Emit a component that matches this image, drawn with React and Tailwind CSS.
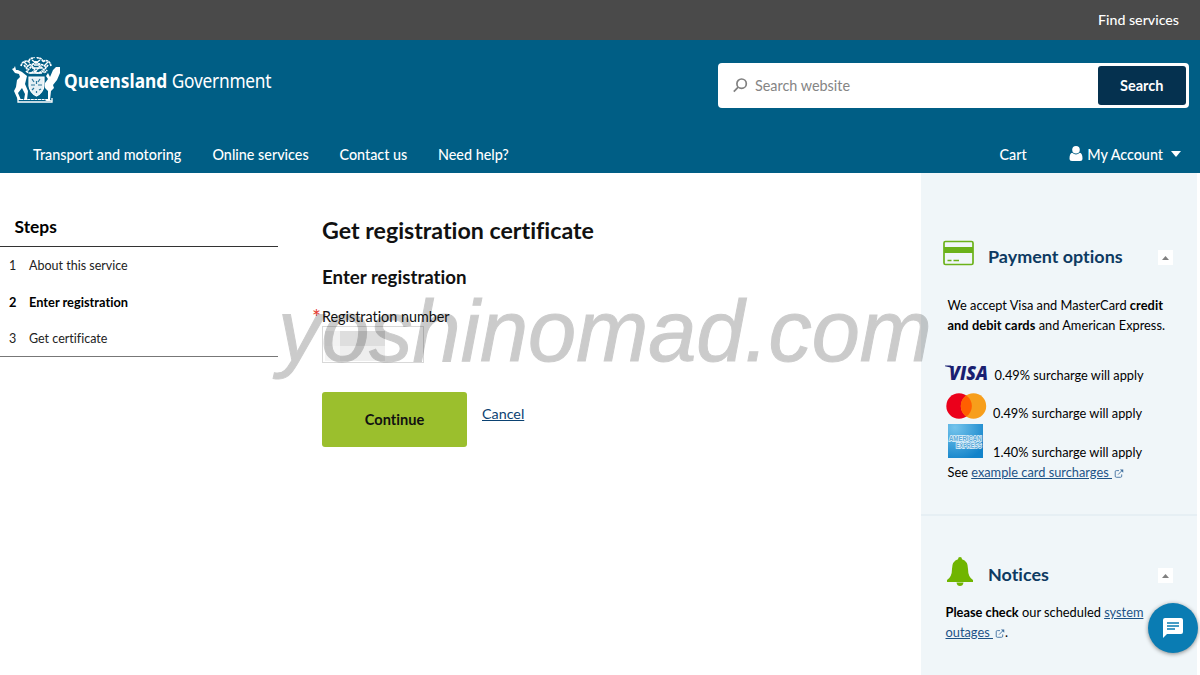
import React from "react";

function Crest() {
  return (
    <svg className="block h-[46px] w-[50px] shrink-0" viewBox="0 0 50 46" fill="none" stroke="#fff">
      <path d="M9 9 C10 4 15 3 17 5 C17 0 22 2 22 0 M39 9 C38 4 34 2 31 5 C30 0 26 2 25 0 M15 10 C18 6 22 9 24 4 C26 9 30 6 34 10 M12 8 L16 13 L20 9 L24 14 L28 9 L32 13 L36 8 M14 14 Q18 18 22 14 Q26 18 30 14 Q33 17 35 13" strokeWidth="1.7" strokeDasharray="2.4 .5" />
      <path d="M20 3 L24 6 L28 3 M20 11 H29 M22 8 H27 M18 16 H30 M12 5 L15 8 M36 5 L33 8" strokeWidth="1.4" />
      <path d="M2 11 L0 12 L3 16 L7 17 L8 20 L5 23 L4 30 L2 34 L6 43 L9 43 L6 36 L10 31 L13 37 L12 43 L15 43 L16 34 L13 27 L15 19 L10 15 L6 13 L4 13 L3 9 Z" fill="#fff" stroke="none" />
      <path d="M34 19 L36 16 L38 20 L41 13 L44 10 L48 10 L48 16 L45 23 L41 28 L42 31 L39 34 L38 43 L41 44 L33 44 L36 42 L36 34 L33 31 L33 26 L36 22 Z" fill="#fff" stroke="none" />
      <path d="M17 20 H32 V29 Q31 36 24.500 39 Q18 36 17 29 Z" fill="#e6f0f5" strokeWidth="1.2" />
      <path d="M20 22 L22 25 M28 22 L26 25 M19 28 H23 M26 28 H30 M20 33 L22 31 M27 33 L29 32 M24.500 34 V36 M24.500 24 V27" stroke="#2a769a" strokeWidth="1.2" />
      <path d="M6 41 V45 H40 V41" strokeWidth="1.300" />
      <path d="M8 42.500 H38" strokeWidth="1.2" strokeDasharray="3 .6" />
    </svg>
  );
}

function ExternalIcon({ className = "" }) {
  return (
    <svg className={"inline-block h-[9px] w-[10px] " + className} viewBox="0 0 10 10" fill="none" stroke="#3f6f9f" strokeWidth="1">
      <path d="M5 1.800 H2 Q.8 1.800 .8 3 V8 Q.8 9.200 2 9.200 H6.800 Q8 9.200 8 8 V6 M4 6.200 L8.300 1.800" />
      <path d="M6 .5 H9.700 V4.200 Z" fill="#3f6f9f" stroke="none" />
    </svg>
  );
}

function Collapse() {
  return (
    <button className="flex h-[15px] w-[15px] shrink-0 items-center justify-center bg-white">
      <svg className="h-1 w-[7px]" viewBox="0 0 7 4" fill="#808080"><path d="M3.500 0 L7 4 H0 Z" /></svg>
    </button>
  );
}

function TopBar() {
  return (
    <div className="flex h-10 items-center justify-end bg-[#4a4a4a] pr-[21px] text-[14.200px] font-medium text-white">
      Find services
    </div>
  );
}

function Header() {
  return (
    <header className="h-[133px] bg-[#005e85] text-white">
      <div className="flex h-[94px] items-start justify-between pr-[11px] pl-3">
        <div className="flex pt-[17px]">
          <Crest />
          <div className="ml-[2px] flex w-[210px] origin-left scale-x-[0.91] gap-[5px] pt-[11px] font-['Noto_Sans'] text-[19px] leading-[26px] whitespace-nowrap">
            <span className="font-bold">Queensland</span>
            <span className="tracking-[-0.25px]">Government</span>
          </div>
        </div>
        <div className="mt-[23px] flex h-[45px] w-[471px] items-center rounded bg-white pr-[3px] pl-[15px]">
          <svg className="h-[15px] w-[15px]" viewBox="0 0 15 15" fill="none" stroke="#808080" strokeWidth="1.700">
            <circle cx="8.600" cy="5.700" r="4.700" />
            <path d="M5.200 9.200 L.8 13.700" />
          </svg>
          <span className="ml-[7px] flex-1 text-[14.400px] text-[#858585]">Search website</span>
          <button className="h-[39px] w-[88.500px] rounded-[3px] bg-[#05314f] text-[14.500px] font-bold">Search</button>
        </div>
      </div>
      <nav className="flex h-[39px] items-center pt-[2px] pr-[19px] pl-[33px] text-[14.350px] leading-[37px] font-medium whitespace-nowrap">
        <a className="w-[179.500px]">Transport and motoring</a>
        <a className="w-[127px]">Online services</a>
        <a className="w-[98.500px]">Contact us</a>
        <a>Need help?</a>
        <a className="ml-auto">Cart</a>
        <a className="ml-[42.500px] flex items-center">
          <svg className="mr-1 mb-[2px] h-[15px] w-[14px]" viewBox="0 0 14 15" fill="#fff">
            <circle cx="7" cy="3.800" r="3.800" />
            <path d="M3.200 6.800 Q7 10 10.800 6.800 Q13.500 7.500 13.500 12.500 Q13.500 15 11 15 H3 Q.5 15 .5 12.500 Q.5 7.500 3.200 6.800 Z" />
          </svg>
          My Account
          <svg className="mb-[2px] ml-2 h-[6px] w-[10px]" viewBox="0 0 10 6" fill="#fff"><path d="M0 0 H10 L5 6 Z" /></svg>
        </a>
      </nav>
    </header>
  );
}

const steps = ["About this service", "Enter registration", "Get certificate"];

function Steps() {
  return (
    <aside className="w-[278px] pt-[36px]">
      <div className="h-[38px] border-b border-[#333] pl-[14.500px] text-[17.400px] leading-[36px] font-bold text-black">Steps</div>
      <ol className="h-[110px] border-b border-[#777] pt-[1px] text-[12.500px] text-[#222]">
        {steps.map((s, i) => (
          <li key={s} className={"flex h-[36.500px] items-center " + (i === 1 ? "text-[12.800px] font-bold text-black" : "")}>
            <span className="ml-[9px] w-[20px] shrink-0">{i + 1}</span>
            <span>{s}</span>
          </li>
        ))}
      </ol>
    </aside>
  );
}

function Content() {
  return (
    <main className="ml-[44px] flex-1 pt-[40px] text-[#111]">
      <h1 className="text-[23.200px] leading-[35px] font-bold">Get registration certificate</h1>
      <h2 className="mt-[15px] text-[18.700px] leading-[28px] font-bold">Enter registration</h2>
      <label className="mt-[17px] -ml-[10px] flex h-[18px] items-center text-[14.350px] leading-[18px]">
        <span className="w-[10px] text-[21px] leading-[18px] text-[#e53c32]">*</span>
        Registration number
      </label>
      <div className="h-[37px] w-[102px] border border-[#d8d8d8] bg-white pt-[4px] pl-[2px]">
        <div className="grid h-[30px] w-[60px] grid-cols-4 grid-rows-2">
          <i className="bg-[#f2f2f2]" /><i className="bg-[#dedede]" /><i className="bg-[#dddddd]" /><i className="bg-[#dedede]" />
          <i className="bg-[#f5f5f5]" /><i className="bg-[#eeeeee]" /><i className="bg-[#eeeeee]" /><i className="bg-[#eeeeee]" />
        </div>
      </div>
      <div className="mt-[29px] flex">
        <button className="h-[55px] w-[145px] rounded-[3px] bg-[#9bbf2d] text-[14.600px] font-bold">Continue</button>
        <a className="mt-[11px] ml-[15px] text-[14.300px] leading-[22px] text-[#0b4272] underline underline-offset-1">Cancel</a>
      </div>
    </main>
  );
}

function Sidebar() {
  return (
    <aside className="mr-[3px] w-[276px] shrink-0 bg-[#f0f6f9] text-[12.800px] leading-[19.500px] whitespace-nowrap text-black">
      <section className="h-[343px] border-b-2 border-[#e6eff4] pt-[67px]">
        <div className="flex h-[34px] items-start pl-[22px]">
          <svg className="h-[26px] w-[31px]" viewBox="0 0 31 26" fill="none">
            <rect x="1" y="1.500" width="29" height="23" rx="1.500" stroke="#6bb21a" strokeWidth="1.700" />
            <path d="M1 7 H30 V13 H1 Z" fill="#6bb21a" />
            <path d="M4.500 20.500 H8.500 M10.500 20.500 H16" stroke="#6bb21a" strokeWidth="1.300" />
          </svg>
          <h3 className="mt-[2px] ml-[14px] text-[17.950px] leading-[28px] font-bold text-[#0d3a62]">Payment options</h3>
          <div className="mt-[10px] mr-[24px] ml-auto"><Collapse /></div>
        </div>
        <p className="mt-[22px] pl-[26.500px]">
          We accept Visa and MasterCard <b className="tracking-[0.05px]">credit</b><br /><b className="tracking-[0.08px]">and debit cards</b> and American Express.
        </p>
        <div className="mt-[28px] flex h-[30px] items-start pl-[24px]">
          <svg className="mt-[2px] h-[15px] w-[44px] overflow-visible" viewBox="0 0 44 15">
            <text x="4" y="14.500" fontFamily="Open Sans" fontSize="19" fontWeight="800" fontStyle="italic" fill="#1a1f71" textLength="39" lengthAdjust="spacingAndGlyphs">VISA</text>
            <path d="M0 .5 H6 L8 4 Q5 2 0 1.300 Z" fill="#1a1f71" />
          </svg>
          <span className="mt-[3px] ml-[5.500px]">0.49% surcharge will apply</span>
        </div>
        <div className="flex h-[30px] items-start pl-[25px]">
          <svg className="h-[26px] w-[41px]" viewBox="0 0 41 26">
            <circle cx="13" cy="13" r="12.700" fill="#eb001b" />
            <circle cx="27.500" cy="13" r="12.700" fill="#f79e1b" />
            <path d="M20.300 2.500 A12.700 12.700 0 0 1 20.300 23.500 A12.700 12.700 0 0 1 20.300 2.500" fill="#ff5f00" />
          </svg>
          <span className="mt-[11px] ml-[6px]">0.49% surcharge will apply</span>
        </div>
        <div className="flex h-[39.500px] items-start pl-[27px]">
          <svg className="mt-[0.500px] h-[34px] w-[35px]" viewBox="0 0 35 34">
            <defs><radialGradient id="amex" cx=".2" cy=".1" r="1"><stop offset="0" stopColor="#74c4ec" /><stop offset="1" stopColor="#1283ca" /></radialGradient></defs>
            <rect width="35" height="34" fill="url(#amex)" />
            <g fontFamily="Liberation Sans" fontWeight="700" fontSize="6.500" fill="#5aa9d8" stroke="#e4f3fb" strokeWidth="1.500" paintOrder="stroke">
              <text x="1" y="17" textLength="32.500" lengthAdjust="spacingAndGlyphs">AMERICAN</text>
              <text x="8" y="24" textLength="25.500" lengthAdjust="spacingAndGlyphs">EXPRESS</text>
            </g>
          </svg>
          <span className="mt-[20px] ml-[10px]">1.40% surcharge will apply</span>
        </div>
        <p className="pl-[26.500px]">See <a className="text-[#1d5387] underline underline-offset-1">example card surcharges&nbsp;</a><ExternalIcon className="ml-[2px]" /></p>
      </section>
      <section className="pt-[41px]">
        <div className="flex h-[36px] items-start pl-[25px]">
          <svg className="h-[29px] w-[28px]" viewBox="0 0 28 29" fill="#70b500">
            <path d="M14 0 Q16 0 16 2.200 Q22 4 22 12 Q22 20 27 23 V25 H1 V23 Q6 20 6 12 Q6 4 12 2.200 Q12 0 14 0 Z M10.500 25.500 H17.500 Q17 29 14 29 Q11 29 10.500 25.500 Z" />
          </svg>
          <h3 className="mt-[3px] ml-[14px] text-[17.950px] leading-[28px] font-bold text-[#0d3a62]">Notices</h3>
          <div className="mt-[11px] mr-[24px] ml-auto"><Collapse /></div>
        </div>
        <p className="mt-[10px] pl-[24.500px]">
          <b>Please check</b> our scheduled <a className="text-[#1d5387] underline underline-offset-1">system</a><br />
          <a className="text-[#1d5387] underline underline-offset-1">outages&nbsp;</a><ExternalIcon className="ml-[2px]" />.
        </p>
      </section>
    </aside>
  );
}

export default function App() {
  return (
    <div className="relative flex h-[675px] w-[1200px] flex-col overflow-hidden bg-white font-['Lato',sans-serif] [font-variant-ligatures:none]">
      <TopBar />
      <Header />
      <div className="flex flex-1">
        <Steps />
        <Content />
        <Sidebar />
      </div>
      <div className="pointer-events-none absolute top-[281px] left-[278px] font-['Liberation_Sans',sans-serif] text-[86.500px] leading-[100px] whitespace-nowrap text-black italic opacity-20 [-webkit-text-stroke:1px_black]">
        yoshinomad.com
      </div>
      <button className="absolute top-[603px] left-[1148px] flex h-[50px] w-[50px] items-center justify-center rounded-full bg-[#0a7cb3] shadow-[0_1px_4px_rgba(0,0,0,0.45)]">
        <svg className="h-5 w-5" viewBox="0 0 20 20">
          <path d="M2 0 H18 Q20 0 20 2 V14 Q20 16 18 16 H4 L0 20 V2 Q0 0 2 0 Z" fill="#fff" />
          <path d="M4 5 H16 M4 8 H16 M4 11 H12" stroke="#0a7cb3" strokeWidth="1.600" />
        </svg>
      </button>
    </div>
  );
}
